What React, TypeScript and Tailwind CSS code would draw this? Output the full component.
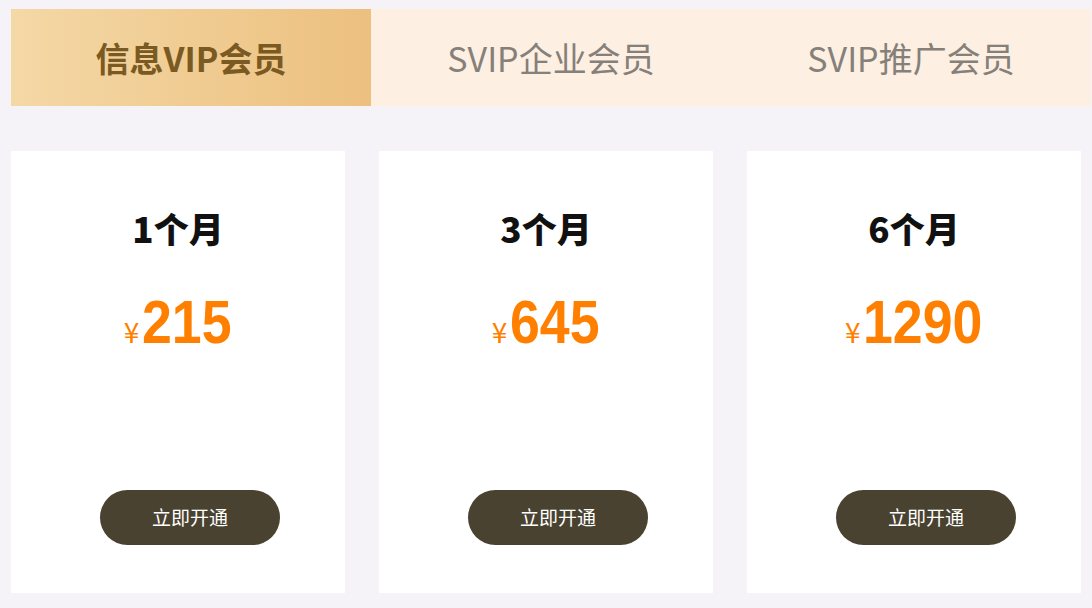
import React from "react";

const tabs = [
  { label: "信息VIP会员", active: true },
  { label: "SVIP企业会员", active: false },
  { label: "SVIP推广会员", active: false },
];

const plans = [
  { title: "1个月", price: "215", fix: "mr-[-12px]" },
  { title: "3个月", price: "645", fix: "mr-[-12px]" },
  { title: "6个月", price: "1290", fix: "mr-[-16px]" },
];

const cjk = { fontFamily: '"Noto Sans CJK SC", "Noto Sans", sans-serif' };
const num = { fontFamily: '"Liberation Sans", Arial, sans-serif' };

export default function App() {
  return (
    <div className="w-[1092px] h-[608px] overflow-hidden bg-[#f5f3f7]" style={cjk}>
      <div className="flex pt-[9px] pl-[11px]">
        {tabs.map((t) =>
          t.active ? (
            <div
              key={t.label}
              className="w-[360px] h-[97px] flex items-center justify-center bg-gradient-to-r from-[#f4d8a6] to-[#ecc07f] text-[#7a5a22] text-[34px] font-bold"
            >
              {t.label}
            </div>
          ) : (
            <div
              key={t.label}
              className="w-[360px] h-[97px] flex items-center justify-center bg-[#fdefe1] text-[#85807a] text-[34px]"
            >
              {t.label}
            </div>
          )
        )}
      </div>
      <div className="flex gap-[34px] pl-[11px] mt-[45px]">
        {plans.map((p) => (
          <div key={p.title} className="w-[334px] h-[442px] bg-white flex flex-col items-center">
            <div className="mt-[57px] text-[35px] leading-[40px] font-black text-[#111111]">{p.title}</div>
            <div className="mt-[44px] h-[60px] flex items-baseline justify-center text-[#ff8000]">
              <span className="text-[28px] leading-[60px] mr-[3px]" style={cjk}>¥</span>
              <span
                className={`inline-block origin-left scale-x-[0.88] text-[61px] leading-[60px] font-bold ${p.fix}`}
                style={num}
              >
                {p.price}
              </span>
            </div>
            <div className="mt-auto mb-[48px] pl-[24px]">
              <button className="w-[180px] h-[55px] rounded-full bg-[#4a4231] text-white text-[19px]">
                立即开通
              </button>
            </div>
          </div>
        ))}
      </div>
    </div>
  );
}
